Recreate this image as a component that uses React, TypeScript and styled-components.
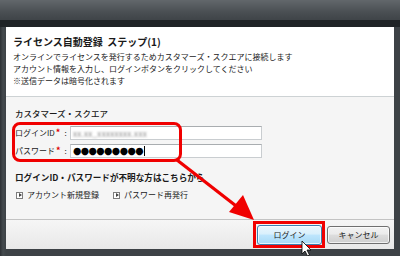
import React from "react";
import styled, { createGlobalStyle } from "styled-components";

const Global = createGlobalStyle`
  html, body { margin: 0; padding: 0; background: #3c4145; }
  * { box-sizing: border-box; }
  body { font-family: "Noto Sans CJK JP", "Noto Sans", sans-serif; color: #1a1a1a; }
`;

const Window = styled.div`
  position: relative;
  width: 400px;
  height: 256px;
  display: flex;
  flex-direction: column;
  background: #3d4246;
  overflow: hidden;
`;

const TitleBar = styled.div`
  height: 20px;
  background: linear-gradient(#62676b, #4a4f53 60%, #3f4448);
`;

const Band = styled.div`
  height: 7px;
  background: #1f2326;
`;

const Frame = styled.div`
  flex: 1;
  display: flex;
  padding: 0 6px 7px 6px;
  background: linear-gradient(90deg, #2c3034 0, #444a4e 3px, #3d4246 6px);
`;

const Dialog = styled.div`
  flex: 1;
  display: flex;
  flex-direction: column;
  background: #f5f5f5;
`;

const Header = styled.div`
  height: 70px;
  background: #ffffff;
  border-bottom: 1px solid #cdd2d4;
  padding: 9px 7px 0 7px;
`;

const Title = styled.div`
  font-size: 10px;
  font-weight: bold;
  line-height: 12px;
  margin-bottom: 3px;
  white-space: nowrap;
`;

const Desc = styled.div`
  font-size: 8px;
  line-height: 12px;
  white-space: nowrap;
`;

const Main = styled.div`
  flex: 1;
  padding: 10px 9px 0 9px;
  position: relative;
`;

const SectionTitle = styled.div`
  font-size: 8.5px;
  line-height: 12px;
  font-weight: 500;
  white-space: nowrap;
`;

const Form = styled.div`
  position: relative;
  margin-top: 7px;
  display: flex;
  flex-direction: column;
  gap: 4px;
`;

const Row = styled.div`
  display: flex;
  align-items: center;
  height: 14px;
`;

const Label = styled.div`
  width: 55px;
  font-size: 8px;
  line-height: 12px;
  white-space: nowrap;
  display: flex;
  align-items: center;
`;

const Star = styled.span`
  color: #e00000;
  font-weight: bold;
  font-size: 9px;
  margin-left: 1px;
  margin-right: 4px;
`;

const Input = styled.div`
  width: 192px;
  height: 14px;
  background: #ffffff;
  border: 1px solid #c9cdd0;
  border-top-color: #a9adb0;
  display: flex;
  align-items: center;
  padding-left: 2px;
  overflow: hidden;
`;

const Blurred = styled.span`
  font-size: 8px;
  color: #8a8a8a;
  filter: blur(1.1px);
  letter-spacing: 0.3px;
  white-space: nowrap;
`;

const Dots = styled.span`
  font-family: "DejaVu Sans", sans-serif;
  font-size: 9.6px;
  letter-spacing: -0.6px;
  color: #000;
  line-height: 12px;
  white-space: nowrap;
`;

const Caret = styled.span`
  display: inline-block;
  width: 1px;
  height: 10px;
  background: #000;
  margin-left: 1px;
`;

const Highlight = styled.div`
  position: absolute;
  left: -3px;
  top: -4px;
  width: 170px;
  height: 40px;
  border: 3px solid #f00000;
  border-radius: 8px;
  pointer-events: none;
`;

const HelpTitle = styled.div`
  margin-top: 13px;
  font-size: 8.6px;
  font-weight: bold;
  line-height: 12px;
  white-space: nowrap;
`;

const Links = styled.div`
  margin-top: 6px;
  display: flex;
  gap: 14px;
  padding-left: 1px;
`;

const LinkItem = styled.div`
  display: flex;
  align-items: center;
  gap: 4px;
  font-size: 8px;
  line-height: 12px;
  white-space: nowrap;
`;

const LinkIcon = styled.span`
  width: 7px;
  height: 7px;
  border: 1px solid #7d7d7d;
  background: #fff;
  display: inline-flex;
  align-items: center;
  justify-content: center;
  &::after {
    content: "";
    border-left: 3px solid #444;
    border-top: 2px solid transparent;
    border-bottom: 2px solid transparent;
    margin-left: 1px;
  }
`;

const Footer = styled.div`
  height: 30px;
  border-top: 1px solid #c3c3c3;
  background: linear-gradient(#f6f6f6, #e8e8e8);
  display: flex;
  justify-content: flex-end;
  align-items: center;
  gap: 5px;
  padding: 0 4px 0 0;
`;

const Button = styled.div<{ $primary?: boolean }>`
  position: relative;
  width: ${(p) => (p.$primary ? 65 : 63)}px;
  height: ${(p) => (p.$primary ? 20 : 18)}px;
  border-radius: 3px;
  border: 1px solid ${(p) => (p.$primary ? "#3c7fb1" : "#707070")};
  background: ${(p) =>
    p.$primary
      ? "linear-gradient(#eaf6fd 0%, #d9f0fc 45%, #bee6fd 50%, #a7d9f5 100%)"
      : "linear-gradient(#f2f2f2 0%, #ebebeb 45%, #dddddd 50%, #cfcfcf 100%)"};
  box-shadow: inset 0 0 0 1px rgba(255, 255, 255, 0.7);
  font-size: 8px;
  display: flex;
  align-items: center;
  justify-content: center;
  white-space: nowrap;
`;

const ButtonMark = styled.div`
  position: absolute;
  left: -5px;
  top: -5px;
  right: -4px;
  bottom: -4px;
  border: 3px solid #f00000;
  pointer-events: none;
`;

const Overlay = styled.svg`
  position: absolute;
  left: 0;
  top: 0;
  width: 400px;
  height: 256px;
  pointer-events: none;
`;

export default function App() {
  return (
    <>
      <Global />
      <Window>
        <TitleBar />
        <Band />
        <Frame>
          <Dialog>
            <Header>
              <Title>ライセンス自動登録&nbsp;&nbsp;ステップ(1)</Title>
              <Desc>オンラインでライセンスを発行するためカスタマーズ・スクエアに接続します</Desc>
              <Desc>アカウント情報を入力し、ログインボタンをクリックしてください</Desc>
              <Desc>※送信データは暗号化されます</Desc>
            </Header>
            <Main>
              <SectionTitle>カスタマーズ・スクエア</SectionTitle>
              <Form>
                <Row>
                  <Label>
                    ログインID<Star>*</Star>:
                  </Label>
                  <Input>
                    <Blurred>xx.xx_xxxxxxxx.xxx</Blurred>
                  </Input>
                </Row>
                <Row>
                  <Label>
                    パスワード<Star>*</Star>:
                  </Label>
                  <Input>
                    <Dots>●●●●●●●●●</Dots>
                    <Caret />
                  </Input>
                </Row>
                <Highlight />
              </Form>
              <HelpTitle>ログインID・パスワードが不明な方はこちらから</HelpTitle>
              <Links>
                <LinkItem>
                  <LinkIcon />
                  アカウント新規登録
                </LinkItem>
                <LinkItem>
                  <LinkIcon />
                  パスワード再発行
                </LinkItem>
              </Links>
            </Main>
            <Footer>
              <Button $primary>
                ログイン
                <ButtonMark />
              </Button>
              <Button>キャンセル</Button>
            </Footer>
          </Dialog>
        </Frame>
        <Overlay viewBox="0 0 400 256">
          <line x1="177" y1="160" x2="240" y2="209" stroke="#f00000" strokeWidth="3.2" />
          <polygon points="254,220 229,212 243,195" fill="#f00000" />
          <path
            d="M302 241 L302 254 L305 251 L307.5 256 L309.5 255 L307 250 L311 250 Z"
            fill="#ffffff"
            stroke="#000000"
            strokeWidth="0.8"
          />
        </Overlay>
      </Window>
    </>
  );
}
